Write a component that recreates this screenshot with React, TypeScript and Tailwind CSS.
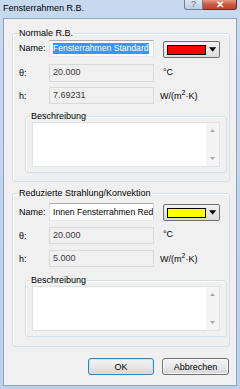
import React from 'react';

const winBtn =
  'flex items-center justify-center rounded-[3px] bg-gradient-to-b from-[#f4f4f4] via-[#e9e9e9] to-[#d6d6d6] text-[9px] leading-[10px]';

function GroupBox({ title, className, children }: { title: string; className: string; children: React.ReactNode }) {
  return (
    <div className={`relative ml-[8px] w-[218px] rounded-[3px] border border-[#d5dfe5] shadow-[inset_1px_1px_0_#fff] ${className}`}>
      <span className="absolute left-[5px] -top-[6px] bg-[#f0f0f0] px-[1px] leading-[10px]">{title}</span>
      {children}
    </div>
  );
}

function ReadOnly({ value, className = '' }: { value: string; className?: string }) {
  return (
    <div className={`flex w-[105px] items-center border border-[#d9d9d9] bg-[#f0f0f0] pl-[3px] text-[#3a3a3a] ${className}`}>
      {value}
    </div>
  );
}

function ColorCombo({ color, className = '' }: { color: string; className?: string }) {
  return (
    <div
      className={`flex h-[17px] w-[57px] items-center rounded-[2px] border border-[#707070] bg-gradient-to-b from-[#f3f3f3] to-[#dcdcdc] pl-[3px] pr-[3px] ${className}`}
    >
      <div className={`h-[10px] w-[42px] border border-black ${color}`} />
      <svg width="8" height="5" viewBox="0 0 8 5" className="ml-[3px]">
        <path d="M0 0H8L4 5Z" fill="#000" />
      </svg>
    </div>
  );
}

function Description() {
  return (
    <div className="relative ml-[6px] h-[57px] w-[202px] rounded-[3px] border border-[#d5dfe5] shadow-[inset_1px_1px_0_#fff]">
      <span className="absolute left-[4px] -top-[6px] bg-[#f0f0f0] px-[1px] leading-[10px]">Beschreibung</span>
      <div className="ml-[6px] mt-[5px] flex h-[45px] w-[188px] border border-[#dde3e8] bg-white">
        <div className="flex-1" />
        <div className="flex w-[13px] flex-col items-center justify-between bg-[#f4f4f4] py-[6px]">
          <svg width="5" height="3" viewBox="0 0 5 3">
            <path d="M0 3L2.5 0L5 3Z" fill="#a8a8a8" />
          </svg>
          <svg width="5" height="3" viewBox="0 0 5 3">
            <path d="M0 0H5L2.5 3Z" fill="#a8a8a8" />
          </svg>
        </div>
      </div>
    </div>
  );
}

function Unit() {
  return (
    <span className="ml-[6px] leading-[10px]">
      W/(m<sup className="text-[7px]">2</sup>·K)
    </span>
  );
}

const nameBox =
  'flex w-[105px] items-center overflow-hidden whitespace-nowrap border border-[#abadb3] border-b-[#e3e9ef] border-l-[#e2e3ea] border-r-[#dbdfe6] bg-white pl-[3px] text-[8.6px]';

export default function App() {
  return (
    <div className="flex h-[389px] w-[240px] flex-col bg-gradient-to-b from-[#c7d9ef] to-[#bcd0ea] font-['Liberation_Sans',Arial,sans-serif] text-[9px] text-black">
      {/* title bar */}
      <div className="flex h-[18px] items-start justify-between pl-[3px] pr-[3px]">
        <span className="mt-[3px] leading-[11px] text-[9px]">Fensterrahmen R.B.</span>
        <div className="flex">
          <div className="flex h-[10px] w-[19px] items-end justify-center rounded-bl-[3px] border border-t-0 border-[#6d7f99] bg-gradient-to-b from-[#dde7f3] to-[#bccde2] text-[9px] leading-[9px] text-[#5a6b80]">
            ?
          </div>
          <div className="flex h-[10px] w-[34px] items-end justify-center rounded-br-[3px] border border-l-0 border-t-0 border-[#6b2c22] bg-gradient-to-b from-[#e19a84] via-[#c9573d] to-[#c0442b] text-[10px] font-bold leading-[9px] text-white">
            ✕
          </div>
        </div>
      </div>

      {/* client area */}
      <div className="mx-[3px] flex h-[368px] flex-col border border-[#8ea2bb] bg-[#f0f0f0]">
        <GroupBox title="Normale R.B." className="mt-[14px] h-[149px]">
          <div className="flex flex-col pl-[6px] pt-[6px]">
            <div className="flex items-start">
              <span className="mt-[3px] w-[30px] leading-[10px]">Name:</span>
              <div className={`${nameBox} h-[17px]`}>
                <span className="bg-[#3399ff] leading-[11px] text-white">Fensterrahmen Standard</span>
              </div>
              <ColorCombo color="bg-[#ff0000]" className="ml-[9px] mt-[1px]" />
            </div>
            <div className="mt-[6px] flex items-center">
              <span className="w-[30px] leading-[10px]">θ:</span>
              <ReadOnly value="20.000" className="h-[18px]" />
              <span className="mb-[3px] ml-[9px] leading-[10px]">°C</span>
            </div>
            <div className="mt-[5px] flex items-center">
              <span className="w-[30px] leading-[10px]">h:</span>
              <ReadOnly value="7.69231" className="h-[17px]" />
              <Unit />
            </div>
            <div className="mt-[12px]">
              <Description />
            </div>
          </div>
        </GroupBox>

        <GroupBox title="Reduzierte Strahlung/Konvektion" className="mt-[11px] h-[154px]">
          <div className="flex flex-col pl-[6px] pt-[9px]">
            <div className="flex items-start">
              <span className="mt-[4px] w-[30px] leading-[10px]">Name:</span>
              <div className={`${nameBox} h-[18px] leading-[11px]`}>Innen Fensterrahmen Red</div>
              <ColorCombo color="bg-[#ffff00]" className="ml-[9px] mt-[1px]" />
            </div>
            <div className="mt-[6px] flex items-center">
              <span className="w-[30px] leading-[10px]">θ:</span>
              <ReadOnly value="20.000" className="h-[17px]" />
              <span className="mb-[3px] ml-[9px] leading-[10px]">°C</span>
            </div>
            <div className="mt-[6px] flex items-center">
              <span className="w-[30px] leading-[10px]">h:</span>
              <ReadOnly value="5.000" className="h-[17px]" />
              <Unit />
            </div>
            <div className="mt-[13px]">
              <Description />
            </div>
          </div>
        </GroupBox>

        <div className="mr-[7px] mt-[11px] flex justify-end gap-[8px]">
          <div className={`${winBtn} h-[17px] w-[66px] border border-[#3c7fb1] shadow-[inset_0_0_0_1px_#c9e6f7]`}>OK</div>
          <div className={`${winBtn} h-[17px] w-[67px] border border-[#707070] shadow-[inset_0_0_0_1px_#fbfbfb]`}>Abbrechen</div>
        </div>
      </div>
    </div>
  );
}
